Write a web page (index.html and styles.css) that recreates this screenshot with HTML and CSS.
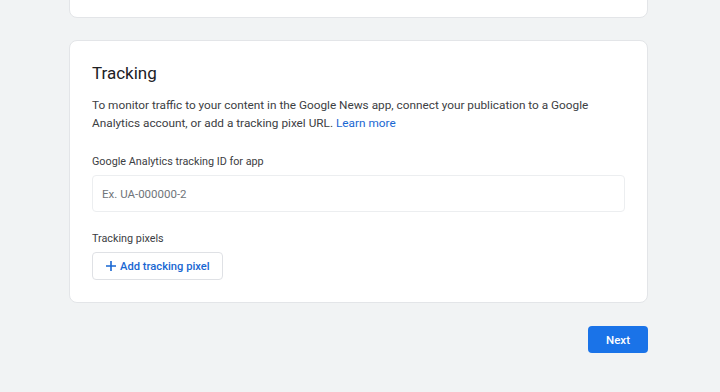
FILE: index.html
```html
<!DOCTYPE html>
<html lang="en">
<head>
    <meta charset="UTF-8">
    <meta name="viewport" content="width=device-width, initial-scale=1.0">
    <title>Tracking</title>
    <link rel="stylesheet" href="styles.css">
</head>
<body>
    <main class="page">
        <section class="card card-prev"></section>

        <section class="card">
            <h2 class="card-title">Tracking</h2>
            <p class="card-text">
                To monitor traffic to your content in the Google News app, connect your publication to a Google
                Analytics account, or add a tracking pixel URL. <a href="#" class="link">Learn more</a>
            </p>

            <label class="field-label" for="gaId">Google Analytics tracking ID for app</label>
            <input type="text" id="gaId" class="field-input" placeholder="Ex. UA-000000-2">

            <div class="field-label field-label-pixels">Tracking pixels</div>
            <button type="button" class="btn-outline">
                <svg width="12" height="12" viewBox="0 0 12 12" aria-hidden="true">
                    <path d="M6 1v10M1 6h10" stroke="#1967d2" stroke-width="1.6" fill="none"/>
                </svg>
                Add tracking pixel
            </button>
        </section>

        <div class="actions">
            <button type="button" class="btn-primary">Next</button>
        </div>
    </main>
</body>
</html>
```

FILE: styles.css
```css
body {
    margin: 0;
    background: #f1f3f4;
    font-family: Roboto, "Noto Sans", Arial, sans-serif;
    color: #3c4043;
}
.page {
    width: 579px;
    margin-left: 69px;
}
.card {
    background: #fff;
    border: 1px solid #e3e5e8;
    border-radius: 8px;
    padding: 20px 22px 22px;
}
.card-prev {
    height: 47px;
    margin-top: -31px;
    padding: 0;
    margin-bottom: 22px;
}
.card-title {
    margin: 0;
    font-size: 17px;
    font-weight: 400;
    line-height: 24px;
    color: #202124;
}
.card-text {
    margin: 11px 0 0;
    font-size: 11.8px;
    line-height: 18px;
}
.link {
    color: #1967d2;
    text-decoration: none;
}
.field-label {
    display: block;
    margin-top: 22px;
    font-size: 10.8px;
    line-height: 16px;
    color: #3c4043;
}
.field-label-pixels {
    margin-top: 19px;
}
.field-input {
    display: block;
    box-sizing: border-box;
    width: 100%;
    height: 37px;
    margin-top: 5px;
    padding: 0 9px;
    border: 1px solid #eceef0;
    border-radius: 4px;
    font-family: inherit;
    font-size: 11.5px;
    color: #202124;
}
.field-input::placeholder {
    color: #70757a;
}
.btn-outline {
    display: inline-flex;
    align-items: center;
    gap: 3px;
    margin-top: 5px;
    height: 28px;
    padding: 0 12px 0 12px;
    background: #fff;
    border: 1px solid #dfe1e5;
    border-radius: 4px;
    font-family: inherit;
    font-size: 11.2px;
    font-weight: 500;
    color: #1967d2;
    cursor: pointer;
}
.actions {
    display: flex;
    justify-content: flex-end;
    margin-top: 23px;
}
.btn-primary {
    width: 60px;
    height: 27px;
    border: none;
    border-radius: 4px;
    background: #1a73e8;
    color: #fff;
    font-family: inherit;
    font-size: 11.5px;
    font-weight: 500;
    cursor: pointer;
}
```
